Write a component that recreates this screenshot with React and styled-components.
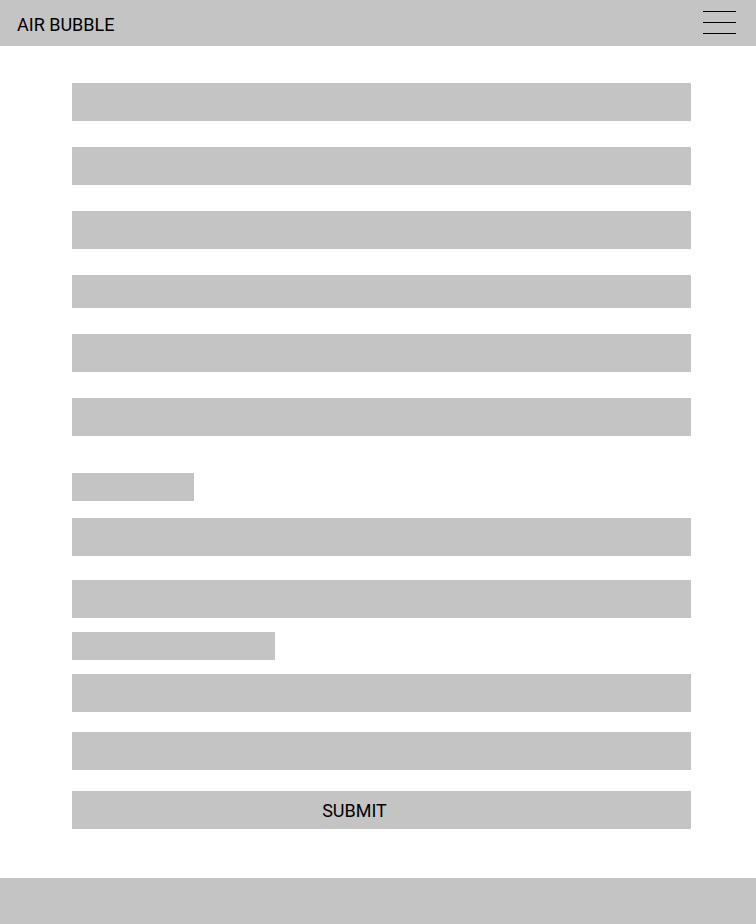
import React from "react";
import styled, { createGlobalStyle } from "styled-components";

const Global = createGlobalStyle`
  html, body { margin: 0; padding: 0; background: #ffffff; }
  body { font-family: Roboto, "Liberation Sans", sans-serif; color: #000; }
  * { box-sizing: border-box; }
`;

const Page = styled.div`
  display: flex;
  flex-direction: column;
  width: 756px;
  min-height: 924px;
`;

const Header = styled.header`
  height: 46px;
  background: #c4c4c4;
  display: flex;
  align-items: center;
  justify-content: space-between;
  padding: 0 20px 0 17px;
`;

const Brand = styled.div`
  font-size: 18px;
  line-height: 1;
  margin-top: 4px;
  letter-spacing: 0;
`;

const Burger = styled.button`
  display: flex;
  flex-direction: column;
  gap: 10px;
  width: 33px;
  padding: 0;
  margin: 0 0 1px 0;
  border: none;
  background: transparent;
  cursor: pointer;
`;

const BurgerLine = styled.span`
  display: block;
  height: 1px;
  width: 33px;
  background: #000;
`;

const Main = styled.main`
  padding: 0 65px 0 72px;
`;

const Form = styled.form`
  display: flex;
  flex-direction: column;
  align-items: flex-start;
`;

const Field = styled.input`
  display: block;
  width: 100%;
  height: ${(p) => p.$h || 38}px;
  margin-top: ${(p) => p.$mt}px;
  border: none;
  outline: none;
  padding: 0 12px;
  background: #c4c4c4;
  font-family: inherit;
  font-size: 16px;
`;

const LabelBox = styled.label`
  display: block;
  width: ${(p) => p.$w}px;
  height: 28px;
  margin-top: ${(p) => p.$mt}px;
  background: #c4c4c4;
`;

const Submit = styled.button`
  display: flex;
  align-items: center;
  justify-content: center;
  width: 100%;
  height: 38px;
  margin-top: ${(p) => p.$mt}px;
  padding: 0 54px 0 0;
  border: none;
  background: #c4c4c4;
  font-family: Roboto, "Liberation Sans", sans-serif;
  font-size: 18px;
  color: #000;
  cursor: pointer;
`;

const Footer = styled.footer`
  height: 46px;
  margin-top: 49px;
  background: #c4c4c4;
`;

export default function App() {
  return (
    <>
      <Global />
      <Page>
        <Header>
          <Brand>AIR BUBBLE</Brand>
          <Burger aria-label="Menu">
            <BurgerLine />
            <BurgerLine />
            <BurgerLine />
          </Burger>
        </Header>
        <Main>
          <Form onSubmit={(e) => e.preventDefault()}>
            <Field $mt={37} />
            <Field $mt={26} />
            <Field $mt={26} />
            <Field $mt={26} $h={33} />
            <Field $mt={26} />
            <Field $mt={26} />
            <LabelBox $mt={37} $w={122} />
            <Field $mt={17} />
            <Field $mt={24} />
            <LabelBox $mt={14} $w={203} />
            <Field $mt={14} />
            <Field $mt={20} />
            <Submit $mt={21} type="submit">SUBMIT</Submit>
          </Form>
        </Main>
        <Footer />
      </Page>
    </>
  );
}
